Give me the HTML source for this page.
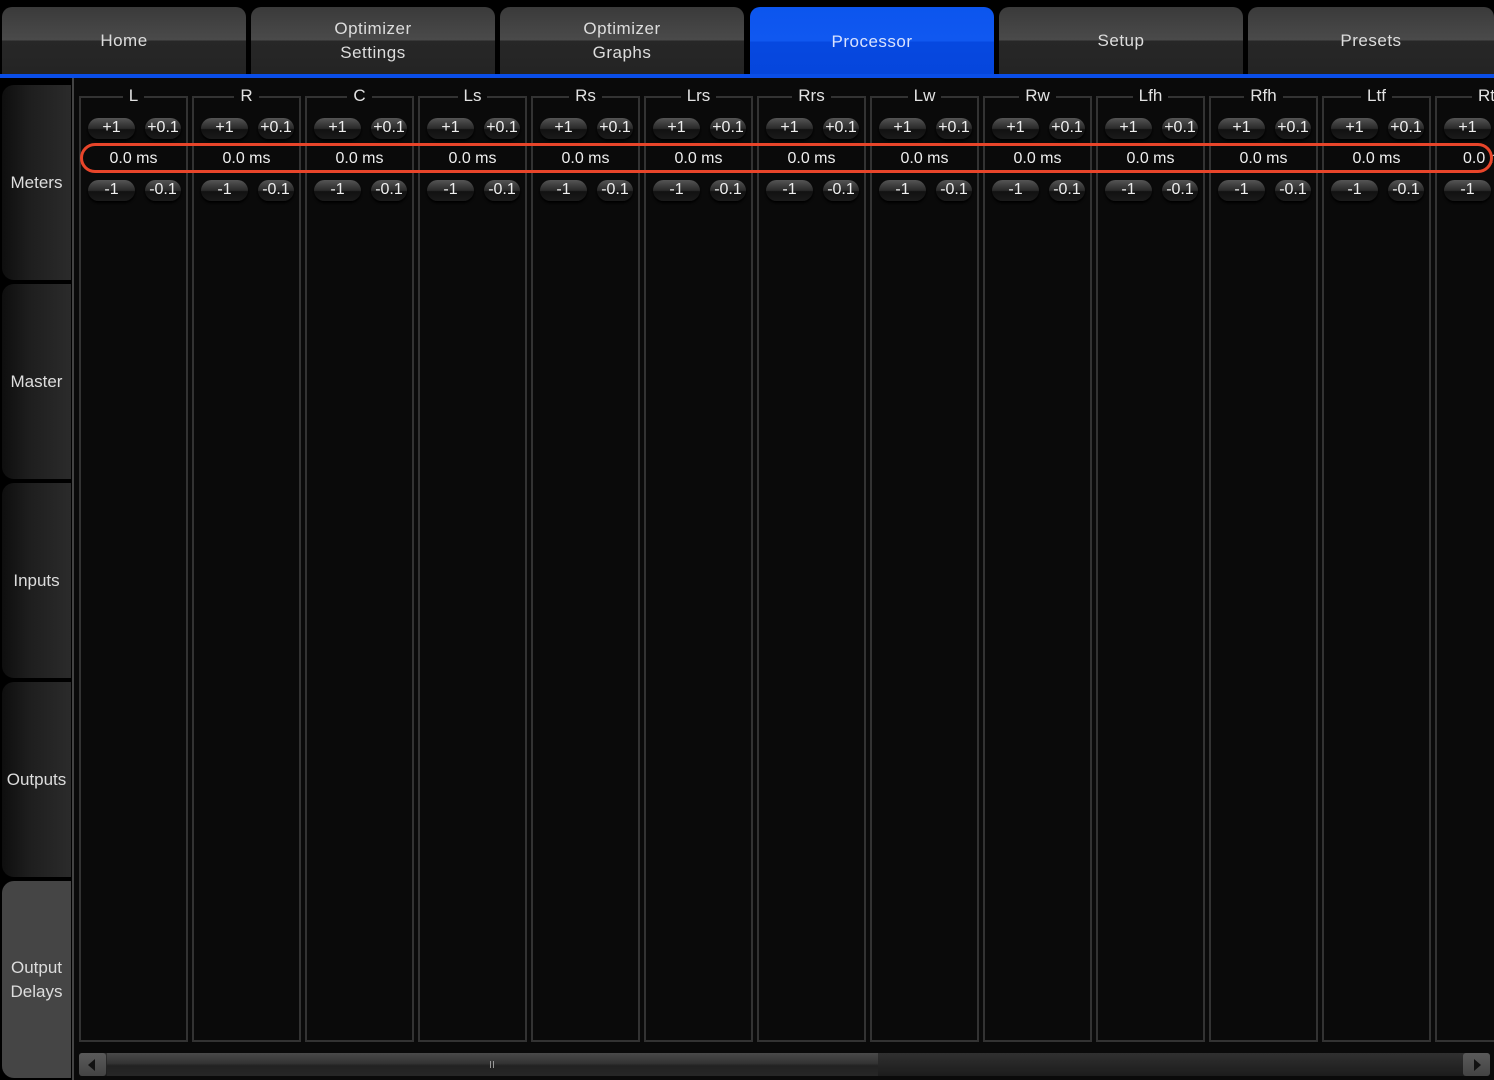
<!DOCTYPE html>
<html><head><meta charset="utf-8"><style>
*{margin:0;padding:0;box-sizing:border-box}
body{width:1494px;height:1080px;background:#000;position:relative;overflow:hidden;font-family:"Liberation Sans",sans-serif;color:#e2e2e2}
.tab{position:absolute;top:7px;height:67px;width:244px;border-radius:10px 10px 0 0;background:linear-gradient(#3a3a3a,#4a4a4a 49%,#272727 51%,#242424);display:flex;align-items:center;justify-content:center;text-align:center;font-size:17px;line-height:24px;letter-spacing:.5px;color:#ddd}
.tab.act{background:linear-gradient(#0c55ee,#1058f0 49%,#0648e0 51%,#0546dc);color:#d8e2ff;height:69px}
.bl{position:absolute;left:0;top:74px;width:1494px;height:4px;background:#0a4ee8}
.main{position:absolute;left:72px;top:78px;width:1422px;height:1002px;background:#0a0a0a;border-left:2px solid #444}
.side{position:absolute;left:2px;width:69px;height:195px;border-radius:12px 0 0 12px;background:linear-gradient(90deg,#0e0e0e,#1e1e1e 40%,#2b2b2b);display:flex;align-items:center;justify-content:center;text-align:center;font-size:17px;line-height:24px;color:#ddd}
.side.sel{background:#454545}
.col{position:absolute;top:96px;width:109px;height:946px;border:2px solid #333}
.hd{position:absolute;top:-12px;left:0;width:100%;text-align:center;font-size:17px;line-height:20px}
.hd span{background:#0a0a0a;padding:0 6px}
.b{position:absolute;height:21px;border-radius:11px;background:linear-gradient(#555,#2a2a2a 50%,#111 55%,#1a1a1a);box-shadow:0 2px 2px #000;font-size:16px;line-height:20px;text-align:center;color:#eee}
.v{position:absolute;top:52px;left:0;width:100%;text-align:center;font-size:16px;color:#eee}
.red{position:absolute;left:80px;top:143px;width:1413px;height:30px;border:3px solid #e8452a;border-radius:15px}
.sb{position:absolute;left:79px;top:1053px;width:1411px;height:23px;background:linear-gradient(#303030,#1c1c1c);border-radius:3px}
</style></head><body>
<div class="tab" style="left:2px">Home</div>
<div class="tab" style="left:251px">Optimizer<br>Settings</div>
<div class="tab" style="left:500px">Optimizer<br>Graphs</div>
<div class="tab act" style="left:750px">Processor</div>
<div class="tab" style="left:999px">Setup</div>
<div class="tab" style="left:1248px;width:246px">Presets</div>
<div class="bl"></div>
<div class="main"></div>
<div class="side" style="top:85px">Meters</div>
<div class="side" style="top:284px">Master</div>
<div class="side" style="top:483px">Inputs</div>
<div class="side" style="top:682px">Outputs</div>
<div class="side sel" style="top:881px;height:197px">Output<br>Delays</div>

<div class="col" style="left:79px"><div class="hd"><span>L</span></div><div class="b" style="left:7px;top:20px;width:47px">+1</div><div class="b" style="left:64px;top:20px;width:36px">+0.1</div><div class="v">0.0 ms</div><div class="b" style="left:7px;top:82px;width:47px">-1</div><div class="b" style="left:64px;top:82px;width:36px">-0.1</div></div>
<div class="col" style="left:192px"><div class="hd"><span>R</span></div><div class="b" style="left:7px;top:20px;width:47px">+1</div><div class="b" style="left:64px;top:20px;width:36px">+0.1</div><div class="v">0.0 ms</div><div class="b" style="left:7px;top:82px;width:47px">-1</div><div class="b" style="left:64px;top:82px;width:36px">-0.1</div></div>
<div class="col" style="left:305px"><div class="hd"><span>C</span></div><div class="b" style="left:7px;top:20px;width:47px">+1</div><div class="b" style="left:64px;top:20px;width:36px">+0.1</div><div class="v">0.0 ms</div><div class="b" style="left:7px;top:82px;width:47px">-1</div><div class="b" style="left:64px;top:82px;width:36px">-0.1</div></div>
<div class="col" style="left:418px"><div class="hd"><span>Ls</span></div><div class="b" style="left:7px;top:20px;width:47px">+1</div><div class="b" style="left:64px;top:20px;width:36px">+0.1</div><div class="v">0.0 ms</div><div class="b" style="left:7px;top:82px;width:47px">-1</div><div class="b" style="left:64px;top:82px;width:36px">-0.1</div></div>
<div class="col" style="left:531px"><div class="hd"><span>Rs</span></div><div class="b" style="left:7px;top:20px;width:47px">+1</div><div class="b" style="left:64px;top:20px;width:36px">+0.1</div><div class="v">0.0 ms</div><div class="b" style="left:7px;top:82px;width:47px">-1</div><div class="b" style="left:64px;top:82px;width:36px">-0.1</div></div>
<div class="col" style="left:644px"><div class="hd"><span>Lrs</span></div><div class="b" style="left:7px;top:20px;width:47px">+1</div><div class="b" style="left:64px;top:20px;width:36px">+0.1</div><div class="v">0.0 ms</div><div class="b" style="left:7px;top:82px;width:47px">-1</div><div class="b" style="left:64px;top:82px;width:36px">-0.1</div></div>
<div class="col" style="left:757px"><div class="hd"><span>Rrs</span></div><div class="b" style="left:7px;top:20px;width:47px">+1</div><div class="b" style="left:64px;top:20px;width:36px">+0.1</div><div class="v">0.0 ms</div><div class="b" style="left:7px;top:82px;width:47px">-1</div><div class="b" style="left:64px;top:82px;width:36px">-0.1</div></div>
<div class="col" style="left:870px"><div class="hd"><span>Lw</span></div><div class="b" style="left:7px;top:20px;width:47px">+1</div><div class="b" style="left:64px;top:20px;width:36px">+0.1</div><div class="v">0.0 ms</div><div class="b" style="left:7px;top:82px;width:47px">-1</div><div class="b" style="left:64px;top:82px;width:36px">-0.1</div></div>
<div class="col" style="left:983px"><div class="hd"><span>Rw</span></div><div class="b" style="left:7px;top:20px;width:47px">+1</div><div class="b" style="left:64px;top:20px;width:36px">+0.1</div><div class="v">0.0 ms</div><div class="b" style="left:7px;top:82px;width:47px">-1</div><div class="b" style="left:64px;top:82px;width:36px">-0.1</div></div>
<div class="col" style="left:1096px"><div class="hd"><span>Lfh</span></div><div class="b" style="left:7px;top:20px;width:47px">+1</div><div class="b" style="left:64px;top:20px;width:36px">+0.1</div><div class="v">0.0 ms</div><div class="b" style="left:7px;top:82px;width:47px">-1</div><div class="b" style="left:64px;top:82px;width:36px">-0.1</div></div>
<div class="col" style="left:1209px"><div class="hd"><span>Rfh</span></div><div class="b" style="left:7px;top:20px;width:47px">+1</div><div class="b" style="left:64px;top:20px;width:36px">+0.1</div><div class="v">0.0 ms</div><div class="b" style="left:7px;top:82px;width:47px">-1</div><div class="b" style="left:64px;top:82px;width:36px">-0.1</div></div>
<div class="col" style="left:1322px"><div class="hd"><span>Ltf</span></div><div class="b" style="left:7px;top:20px;width:47px">+1</div><div class="b" style="left:64px;top:20px;width:36px">+0.1</div><div class="v">0.0 ms</div><div class="b" style="left:7px;top:82px;width:47px">-1</div><div class="b" style="left:64px;top:82px;width:36px">-0.1</div></div>
<div class="col" style="left:1435px;width:80px;border-right:none"><div class="hd" style="text-align:right;width:58px"><span style="padding-right:0">Rt</span></div><div class="b" style="left:7px;top:20px;width:47px">+1</div><div class="v" style="text-align:left;left:26px">0.0 ms</div><div class="b" style="left:7px;top:82px;width:47px">-1</div></div>
<div class="red"></div>

<div class="sb">
 <div style="position:absolute;left:0;top:0;width:27px;height:23px;background:linear-gradient(#5a5a5a,#444);border-radius:3px"></div>
 <div style="position:absolute;left:9px;top:6px;width:0;height:0;border-top:6px solid transparent;border-bottom:6px solid transparent;border-right:7px solid #111"></div>
 <div style="position:absolute;left:28px;top:0;width:771px;height:23px;background:linear-gradient(#4a4a4a,#333 45%,#222 55%,#262626)"></div>
 <div style="position:absolute;left:411px;top:8px;width:1px;height:7px;background:#999;box-shadow:3px 0 0 #999"></div>
 <div style="position:absolute;right:0;top:0;width:27px;height:23px;background:linear-gradient(#5a5a5a,#444);border-radius:3px"></div>
 <div style="position:absolute;right:9px;top:6px;width:0;height:0;border-top:6px solid transparent;border-bottom:6px solid transparent;border-left:7px solid #111"></div>
</div>
</body></html>
